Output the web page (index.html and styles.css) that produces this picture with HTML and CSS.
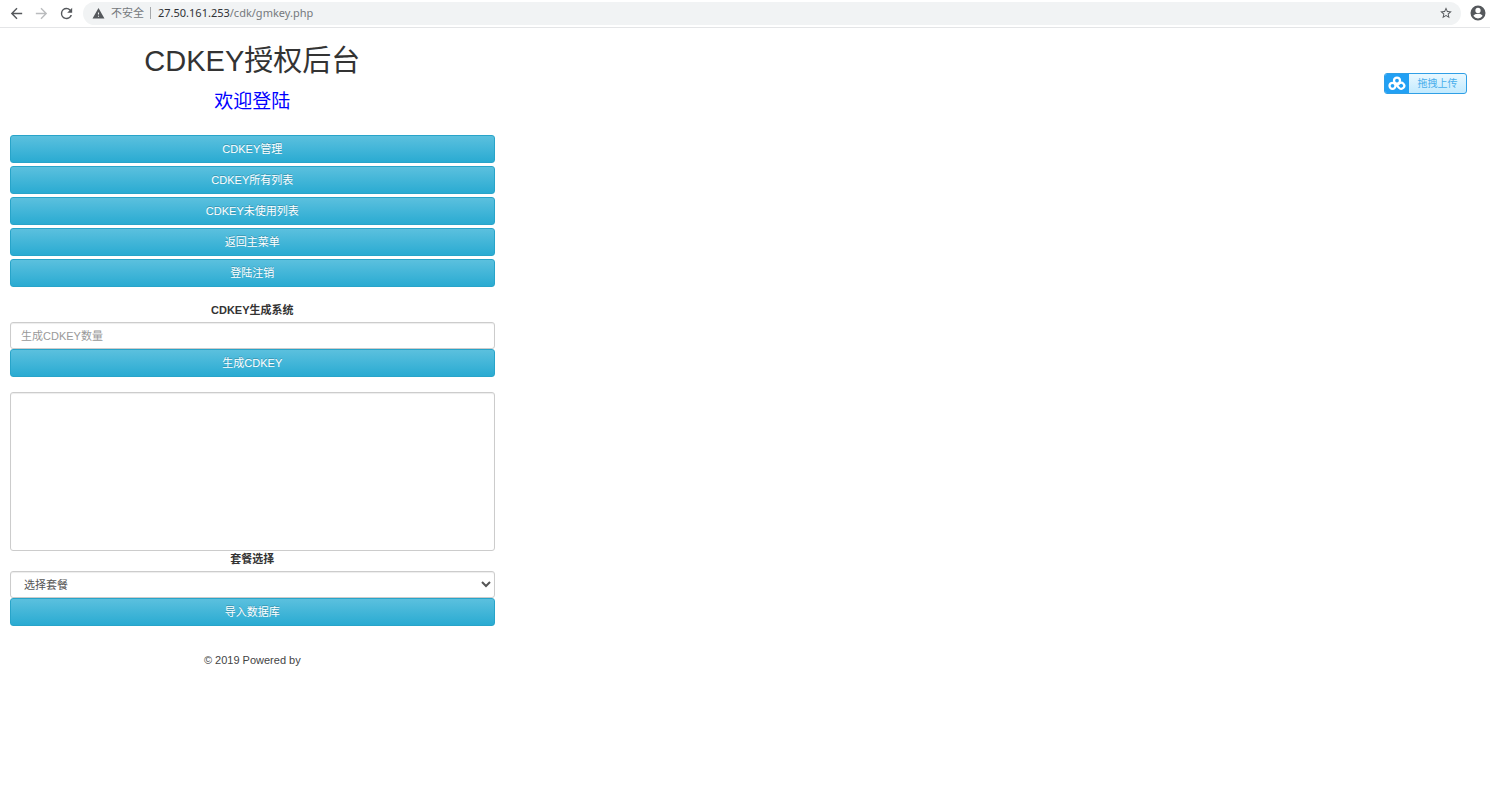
FILE: index.html
```
<!DOCTYPE html>
<html lang="zh-CN">
<head>
    <meta charset="UTF-8">
    <meta name="viewport" content="width=device-width, initial-scale=1.0">
    <title>CDKEY授权后台</title>
    <link rel="stylesheet" href="styles.css">
</head>
<body>

    <!-- 浏览器工具栏 -->
    <header class="toolbar">
        <button type="button" class="tool" aria-label="后退">
            <svg viewBox="0 0 24 24" width="17" height="17"><path d="M20 11H7.83l5.59-5.59L12 4l-8 8 8 8 1.41-1.41L7.83 13H20v-2z"/></svg>
        </button>
        <button type="button" class="tool tool-off" aria-label="前进">
            <svg viewBox="0 0 24 24" width="17" height="17"><path d="M12 4l-1.41 1.41L16.17 11H4v2h12.17l-5.58 5.59L12 20l8-8z"/></svg>
        </button>
        <button type="button" class="tool" aria-label="刷新">
            <svg viewBox="0 0 24 24" width="17" height="17"><path d="M17.65 6.35A7.96 7.96 0 0 0 12 4a8 8 0 1 0 7.73 10h-2.08A6 6 0 1 1 12 6c1.66 0 3.14.69 4.22 1.78L13 11h7V4l-2.35 2.35z"/></svg>
        </button>
        <div class="address">
            <svg class="warn" viewBox="0 0 24 24" width="13" height="13"><path d="M1 21h22L12 2 1 21zm12-3h-2v-2h2v2zm0-4h-2v-4h2v4z"/></svg>
            <span class="insecure">不安全</span>
            <span class="divider"></span>
            <span class="url"><span class="host">27.50.161.253</span>/cdk/gmkey.php</span>
            <button type="button" class="star" aria-label="收藏">
                <svg viewBox="0 0 24 24" width="14" height="14"><path d="M22 9.24l-7.19-.62L12 2 9.19 8.63 2 9.24l5.46 4.73L5.82 21 12 17.27 18.18 21l-1.63-7.03L22 9.24zM12 15.4l-3.76 2.27 1-4.28-3.32-2.88 4.38-.38L12 6.1l1.71 4.04 4.38.38-3.32 2.88 1 4.28L12 15.4z"/></svg>
            </button>
        </div>
        <button type="button" class="tool" aria-label="用户">
            <svg viewBox="0 0 24 24" width="18" height="18"><path d="M12 2a10 10 0 1 0 0 20 10 10 0 0 0 0-20zm0 3a3.5 3.5 0 1 1 0 7 3.5 3.5 0 0 1 0-7zm0 14.2a7.2 7.2 0 0 1-6-3.22c.03-1.99 4-3.08 6-3.08s5.97 1.09 6 3.08a7.2 7.2 0 0 1-6 3.22z"/></svg>
        </button>
    </header>

    <!-- 悬浮上传按钮 -->
    <button type="button" class="upload">
        <span class="upload-icon">
            <svg viewBox="0 0 24 20" width="18" height="15"><circle cx="12" cy="6" r="4"/><circle cx="6" cy="13" r="4"/><path d="M9 10l6 6a4 4 0 1 0 0-6l-3 3"/></svg>
        </span>
        <span class="upload-text">拖拽上传</span>
    </button>

    <main class="container">
        <h1>CDKEY授权后台</h1>
        <p class="welcome">欢迎登陆</p>

        <nav class="menu">
            <button type="button" class="btn">CDKEY管理</button>
            <button type="button" class="btn">CDKEY所有列表</button>
            <button type="button" class="btn">CDKEY未使用列表</button>
            <button type="button" class="btn">返回主菜单</button>
            <button type="button" class="btn">登陆注销</button>
        </nav>

        <!-- 生成CDKEY -->
        <form class="generate">
            <label for="amount">CDKEY生成系统</label>
            <input type="text" id="amount" class="control" placeholder="生成CDKEY数量">
            <button type="button" class="btn">生成CDKEY</button>
        </form>

        <!-- 导入数据库 -->
        <form class="import">
            <textarea class="control" id="keys" aria-label="CDKEY列表"></textarea>
            <label for="plan">套餐选择</label>
            <select id="plan" class="control">
                <option>选择套餐</option>
            </select>
            <button type="button" class="btn">导入数据库</button>
        </form>

        <footer>© 2019 Powered by</footer>
    </main>

</body>
</html>
```
FILE: styles.css
```
* {
    box-sizing: border-box;
}

body {
    margin: 0;
    font-family: "Liberation Sans", Arial, "Noto Sans CJK SC", sans-serif;
    font-size: 11px;
    line-height: 16px;
    color: #333;
    background-color: #fff;
}

button,
input,
select,
textarea {
    font-family: inherit;
    font-size: inherit;
    line-height: inherit;
}

svg {
    display: block;
}

/* 工具栏 */
.toolbar {
    display: flex;
    align-items: center;
    gap: 8px;
    height: 28px;
    padding: 0 3px 1px 8px;
    border-bottom: 1px solid #e4e5e7;
}

.tool,
.star {
    padding: 0;
    border: none;
    background: none;
    fill: #55585c;
    cursor: pointer;
}

.tool-off {
    fill: #babcbe;
}

.address {
    flex: 1;
    display: flex;
    align-items: center;
    height: 23px;
    padding: 0 8px 0 9px;
    border-radius: 12px;
    background-color: #f1f3f4;
    font-family: "Noto Sans", "Noto Sans CJK SC", sans-serif;
    color: #75797d;
}

.warn {
    fill: #55585c;
}

.insecure {
    margin-left: 6px;
}

.divider {
    width: 1px;
    height: 12px;
    margin: 0 7px 0 6px;
    background-color: #a5a8ab;
}

.host {
    color: #303236;
}

.star {
    margin-left: auto;
}

/* 上传按钮 */
.upload {
    position: absolute;
    top: 73px;
    right: 23px;
    display: flex;
    width: 83px;
    height: 21px;
    padding: 0;
    border: 1px solid #2f9fe6;
    border-radius: 3px;
    overflow: hidden;
    background: linear-gradient(#e9f8ff, #c2eafe);
    font-size: 10px;
    color: #48aeec;
    cursor: pointer;
}

.upload-icon {
    display: flex;
    align-items: center;
    justify-content: center;
    width: 24px;
    height: 100%;
    background-color: #22a0f4;
}

.upload-icon svg {
    fill: none;
    stroke: #fff;
    stroke-width: 3;
}

.upload-text {
    flex: 1;
    line-height: 19px;
}

/* 主要内容 */
.container {
    width: 34%;
    padding: 13px 12px 0 10px;
    text-align: center;
}

h1 {
    margin: 0;
    font-size: 29px;
    font-weight: normal;
    line-height: 40px;
}

.welcome {
    margin: 3px 0 16px;
    font-size: 19px;
    line-height: 35px;
    color: #00f;
}

.menu {
    display: flex;
    flex-direction: column;
    gap: 3px;
}

.btn {
    display: block;
    width: 100%;
    height: 28px;
    padding: 0;
    border: 1px solid #28a4c9;
    border-radius: 3px;
    background: linear-gradient(#5bc0de, #2aabd2);
    color: #fff;
    text-shadow: 0 -1px 0 rgba(0, 0, 0, 0.2);
    cursor: pointer;
}

.btn:hover {
    background: #2aabd2;
}

label {
    display: block;
    font-weight: bold;
}

.generate {
    margin-top: 15px;
}

.generate label,
.import label {
    margin-bottom: 4px;
}

.control {
    display: block;
    width: 100%;
    height: 27px;
    padding: 0 10px;
    border: 1px solid #ccc;
    border-radius: 3px;
    background-color: #fff;
    color: #555;
    box-shadow: inset 0 1px 1px rgba(0, 0, 0, 0.075);
}

.control::placeholder {
    color: #999;
}

select.control {
    padding: 0 9px;
}

.import {
    margin-top: 15px;
}

textarea.control {
    height: 159px;
    resize: none;
}

footer {
    margin-top: 26px;
    color: #444;
}
```
